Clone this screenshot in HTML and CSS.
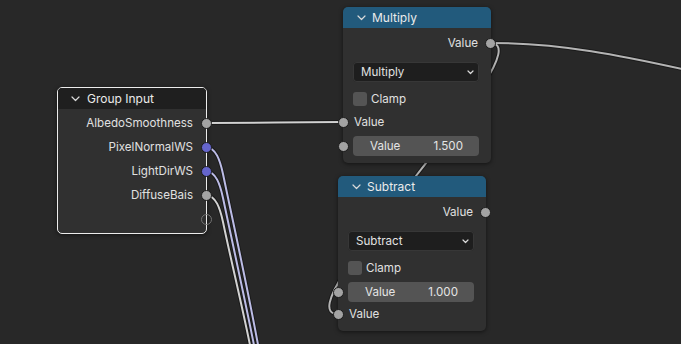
FILE: index.html
```html
<!DOCTYPE html>
<html>
<head>
<meta charset="utf-8">
<link rel="stylesheet" href="styles.css">
</head>
<body>
<div class="canvas">
  <svg class="links" width="681" height="344" viewBox="0 0 681 344">
    <g class="outline">
      <path d="M206,123 C 260,123 290,122 343,122"/>
      <path d="M490,43 C 560,43 620,55 700,73"/>
      <path d="M490,43 C 550,43 278,314 338,314"/>
      <path d="M206,147 C 216,148 220,160 223,174 C 236,236 248,290 259,350"/>
      <path d="M206,171 C 216,172 220,184 223,198 C 234,250 245,300 255,350"/>
      <path d="M206,195 C 216,196 220,208 223,222 C 232,265 242,305 251,350"/>
    </g>
    <path class="l-white" d="M206,123 C 260,123 290,122 343,122"/>
    <path class="l-gray" d="M490,43 C 560,43 620,55 700,73"/>
    <path class="l-gray" d="M490,43 C 550,43 278,314 338,314"/>
    <path class="l-vec" d="M206,147 C 216,148 220,160 223,174 C 236,236 248,290 259,350"/>
    <path class="l-vec" d="M206,171 C 216,172 220,184 223,198 C 234,250 245,300 255,350"/>
    <path class="l-white" d="M206,195 C 216,196 220,208 223,222 C 232,265 242,305 251,350"/>
  </svg>

  <div class="node node-group selected">
    <div class="head head-dark">
      <svg class="chev" width="9" height="6" viewBox="0 0 9 6"><polyline points="1,1 4.5,4.5 8,1"/></svg>
      <span>Group Input</span>
    </div>
    <div class="gbody">
      <div class="row out">AlbedoSmoothness<i class="sock sock-r"></i></div>
      <div class="row out">PixelNormalWS<i class="sock sock-r vec"></i></div>
      <div class="row out">LightDirWS<i class="sock sock-r vec"></i></div>
      <div class="row out">DiffuseBais<i class="sock sock-r"></i></div>
      <div class="row out"><i class="sock sock-r empty"></i></div>
    </div>
  </div>

  <div class="node node-mul">
    <div class="head head-blue">
      <svg class="chev" width="9" height="6" viewBox="0 0 9 6"><polyline points="1,1 4.5,4.5 8,1"/></svg>
      <span>Multiply</span>
    </div>
    <div class="mbody">
      <div class="mrow out">Value<i class="sock sock-r"></i></div>
      <div class="select"><span>Multiply</span><svg class="dd" width="7" height="5" viewBox="0 0 7 5"><polyline points="1,1 3.5,3.5 6,1"/></svg></div>
      <div class="check"><i class="box"></i><span>Clamp</span></div>
      <div class="mrow in in-first">Value<i class="sock sock-l"></i></div>
      <div class="field field-mul"><span>Value</span><span>1.500</span><i class="sock sock-l"></i></div>
    </div>
  </div>

  <div class="node node-sub">
    <div class="head head-blue">
      <svg class="chev" width="9" height="6" viewBox="0 0 9 6"><polyline points="1,1 4.5,4.5 8,1"/></svg>
      <span>Subtract</span>
    </div>
    <div class="mbody mbody-sub">
      <div class="mrow out">Value<i class="sock sock-r"></i></div>
      <div class="select"><span>Subtract</span><svg class="dd" width="7" height="5" viewBox="0 0 7 5"><polyline points="1,1 3.5,3.5 6,1"/></svg></div>
      <div class="check"><i class="box"></i><span>Clamp</span></div>
      <div class="field field-sub"><span>Value</span><span>1.000</span><i class="sock sock-l"></i></div>
      <div class="mrow in in-last">Value<i class="sock sock-l"></i></div>
    </div>
  </div>
</div>
</body>
</html>
```

FILE: styles.css
```css
* { box-sizing: border-box; }
html, body { margin: 0; padding: 0; background: #282828; }
body {
  font-family: "Inter", "DejaVu Sans", sans-serif;
  font-size: 11.6px;
  color: #e0e0e0;
}
.canvas {
  position: relative;
  width: 681px;
  height: 344px;
  overflow: hidden;
  background: #282828;
}
.links { position: absolute; left: 0; top: 0; }
.links path { fill: none; stroke-linecap: round; }
.outline path { stroke: #1a1a1a; stroke-width: 4; }
.l-white { stroke: #d2d2d2; stroke-width: 2; }
.l-gray { stroke: #b4b4b4; stroke-width: 2; }
.l-vec { stroke: #bcbce6; stroke-width: 2; }

.node {
  position: absolute;
  background: #303030;
  border-radius: 5px;
  box-shadow: 0 1px 4px rgba(0,0,0,0.55);
}
.node-group { left: 57px; top: 87px; width: 150px; height: 147px; }
.node-mul { left: 343px; top: 7px; width: 148px; height: 156px; }
.node-sub { left: 338px; top: 176px; width: 148px; height: 155px; }
.selected { border: 1px solid #ececec; }

.head {
  display: flex;
  align-items: center;
  height: 21px;
  padding-left: 13px;
  color: #ebebeb;
  font-size: 12px;
}
.head-dark { background: #1f1f1f; border-radius: 4px 4px 0 0; height: 21px; }
.head-blue { background: #225a7c; border-radius: 5px 5px 0 0; padding-left: 14px; }
.head span { margin-left: 6px; }
.head-dark span { margin-left: 7px; }
.chev polyline, .dd polyline {
  fill: none;
  stroke: #dadada;
  stroke-width: 1.2;
  stroke-linecap: round;
  stroke-linejoin: round;
}

.gbody { padding-top: 2px; }
.row {
  position: relative;
  height: 24px;
  display: flex;
  align-items: center;
  justify-content: flex-end;
  padding-right: 13px;
}

.sock {
  position: absolute;
  top: 50%;
  width: 11px;
  height: 11px;
  margin-top: -5.5px;
  border-radius: 50%;
  background: #a3a3a3;
  border: 1px solid #1c1c1c;
}
.row .sock-r { right: -5.5px; }
.vec { background: #6565cc; }
.empty { background: transparent; border: 1.5px solid #727272; }

.mbody { padding-top: 4px; }
.mrow {
  position: relative;
  height: 22px;
  display: flex;
  align-items: center;
}
.mrow.out { justify-content: flex-end; padding-right: 13px; }
.mrow.in { padding-left: 11px; }
.mrow .sock-r { right: -4.5px; }
.sock-l { left: -5.5px; }
.in-first { margin-top: 1px; }
.in-last { margin-top: 1px; }

.select {
  margin: 8px 12px 0 10px;
  height: 20px;
  border-radius: 4px;
  background: #1e1e1e;
  box-shadow: inset 0 0 0 1px #373737;
  display: flex;
  align-items: center;
  justify-content: space-between;
  padding: 0 5px 0 8px;
  color: #e2e2e2;
}
.check {
  display: flex;
  align-items: center;
  height: 23px;
  margin-top: 5px;
  padding-left: 10px;
}
.box {
  width: 14px;
  height: 14px;
  border-radius: 3px;
  background: #545454;
}
.check span { margin-left: 4px; }

.field {
  position: relative;
  margin: 3px 12px 0 10px;
  height: 20px;
  border-radius: 4px;
  background: #545454;
  display: flex;
  align-items: center;
  justify-content: space-between;
  padding: 0 16px 0 17px;
  color: #e4e4e4;
}
.field .sock-l { left: -15.5px; }
```
